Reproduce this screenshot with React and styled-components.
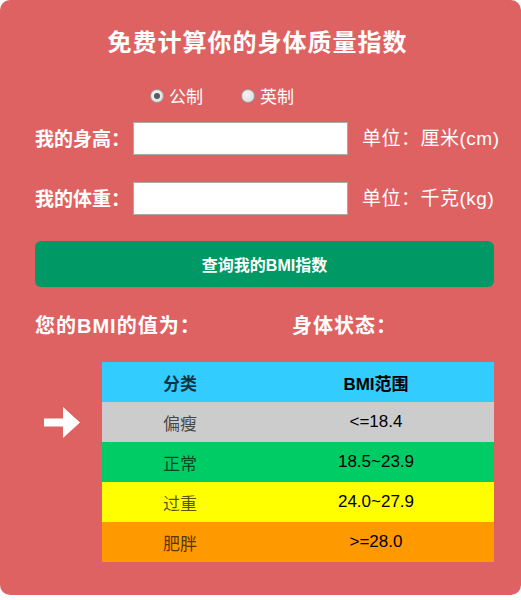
import React, { useState } from "react"
import styled, { createGlobalStyle } from "styled-components"

const GlobalStyle = createGlobalStyle`
  html, body {
    margin: 0;
    padding: 0;
    background: #ffffff;
  }
  body {
    font-family: "Liberation Sans", "Noto Sans CJK SC", sans-serif;
  }
  * {
    box-sizing: border-box;
  }
`

const ranges = [
  { name: "偏瘦", range: "<=18.4", bg: "#cccccc" },
  { name: "正常", range: "18.5~23.9", bg: "#00cc66" },
  { name: "过重", range: "24.0~27.9", bg: "#ffff00" },
  { name: "肥胖", range: ">=28.0", bg: "#ff9900" },
]

export default function App() {
  const [unit, setUnit] = useState("metric")
  const [height, setHeight] = useState("")
  const [weight, setWeight] = useState("")

  return (
    <>
      <GlobalStyle />
      <Card>
        <Title>免费计算你的身体质量指数</Title>
        <RadioRow>
          <RadioLabel>
            <Radio
              type="radio"
              name="unit"
              checked={unit === "metric"}
              onChange={() => setUnit("metric")}
            />
            公制
          </RadioLabel>
          <RadioLabel>
            <Radio
              type="radio"
              name="unit"
              checked={unit === "imperial"}
              onChange={() => setUnit("imperial")}
            />
            英制
          </RadioLabel>
        </RadioRow>

        <FieldRow>
          <FieldLabel>我的身高：</FieldLabel>
          <Input value={height} onChange={(e) => setHeight(e.target.value)} />
          <Unit>单位：厘米(cm)</Unit>
        </FieldRow>
        <FieldRow $gap={27}>
          <FieldLabel>我的体重：</FieldLabel>
          <Input value={weight} onChange={(e) => setWeight(e.target.value)} />
          <Unit>单位：千克(kg)</Unit>
        </FieldRow>

        <Button type="button">查询我的BMI指数</Button>

        <ResultRow>
          <ResultItem $width={257}>您的BMI的值为：</ResultItem>
          <ResultItem>身体状态：</ResultItem>
        </ResultRow>

        <TableArea>
          <Pointer>
            <svg width="36" height="31" viewBox="0 0 36 31">
              <rect x="0" y="11.5" width="20" height="8" fill="#ffffff" />
              <polygon points="19,0 36,15.5 19,31" fill="#ffffff" />
            </svg>
          </Pointer>
          <Table>
            <thead>
              <HeadRow>
                <HeadCell $first>分类</HeadCell>
                <HeadCell>BMI范围</HeadCell>
              </HeadRow>
            </thead>
            <tbody>
              {ranges.map((r) => (
                <BodyRow key={r.name} $bg={r.bg}>
                  <NameCell>{r.name}</NameCell>
                  <RangeCell>{r.range}</RangeCell>
                </BodyRow>
              ))}
            </tbody>
          </Table>
        </TableArea>
      </Card>
    </>
  )
}

const Card = styled.div`
  width: 521px;
  background: #df6262;
  border-radius: 10px;
  padding: 28px 27px 33px 35px;
  color: #ffffff;
`

const Title = styled.h1`
  margin: 0;
  font-size: 24px;
  line-height: 30px;
  font-weight: bold;
  text-align: center;
  letter-spacing: 1px;
  padding-right: 14px;
`

const RadioRow = styled.div`
  display: flex;
  align-items: center;
  gap: 38px;
  height: 24px;
  margin-top: 28px;
  padding-left: 115px;
`

const RadioLabel = styled.label`
  display: flex;
  align-items: center;
  gap: 5px;
  font-size: 17px;
  line-height: 24px;
  cursor: pointer;
`

const Radio = styled.input`
  appearance: none;
  margin: 0 0 4px 0;
  width: 14px;
  height: 14px;
  border-radius: 50%;
  border: 1px solid #9a9a9a;
  background: radial-gradient(circle at 40% 35%, #f4f4f4 0%, #d8d8d8 100%);
  position: relative;
  cursor: pointer;

  &:checked::after {
    content: "";
    position: absolute;
    left: 3px;
    top: 3px;
    width: 6px;
    height: 6px;
    border-radius: 50%;
    background: #5a5a5a;
  }
`

const FieldRow = styled.div`
  display: flex;
  align-items: center;
  height: 33px;
  margin-top: ${(p) => (p.$gap ? p.$gap : 12)}px;

  & > * {
    flex-shrink: 0;
  }
`

const FieldLabel = styled.span`
  width: 98px;
  font-size: 19px;
  font-weight: bold;
  line-height: 24px;
  margin-top: 2px;
  white-space: nowrap;
`

const Input = styled.input`
  width: 215px;
  height: 33px;
  border: 1px solid #a9a9a9;
  background: #ffffff;
  padding: 0 6px;
  font-size: 16px;
  outline: none;
`

const Unit = styled.span`
  margin-left: 14px;
  font-size: 19px;
  line-height: 24px;
  letter-spacing: 0.5px;
  white-space: nowrap;
`

const Button = styled.button`
  display: block;
  width: 459px;
  height: 46px;
  margin-top: 26px;
  border: none;
  border-radius: 6px;
  background: #009966;
  color: #ffffff;
  font-family: inherit;
  font-size: 16px;
  font-weight: bold;
  cursor: pointer;
`

const ResultRow = styled.div`
  display: flex;
  margin-top: 27px;
  height: 24px;
`

const ResultItem = styled.span`
  width: ${(p) => (p.$width ? `${p.$width}px` : "auto")};
  font-size: 20px;
  font-weight: bold;
  line-height: 24px;
  letter-spacing: 1px;
`

const TableArea = styled.div`
  display: flex;
  margin-top: 24px;
`

const Pointer = styled.div`
  width: 67px;
  padding: 45px 0 0 9px;
`

const Table = styled.table`
  width: 392px;
  border-collapse: collapse;
  border-spacing: 0;
`

const HeadRow = styled.tr`
  background: #33ccff;
  height: 40px;
`

const HeadCell = styled.th`
  width: ${(p) => (p.$first ? "156px" : "auto")};
  padding: 0;
  font-size: 17px;
  font-weight: bold;
  text-align: center;
  color: ${(p) => (p.$first ? "rgba(0, 0, 0, 0.75)" : "#000000")};
`

const BodyRow = styled.tr`
  background: ${(p) => p.$bg};
  height: 40px;
`

const NameCell = styled.td`
  padding: 0;
  font-size: 17px;
  text-align: center;
  color: rgba(0, 0, 0, 0.68);
`

const RangeCell = styled.td`
  padding: 0;
  font-size: 17px;
  text-align: center;
  color: #000000;
`
